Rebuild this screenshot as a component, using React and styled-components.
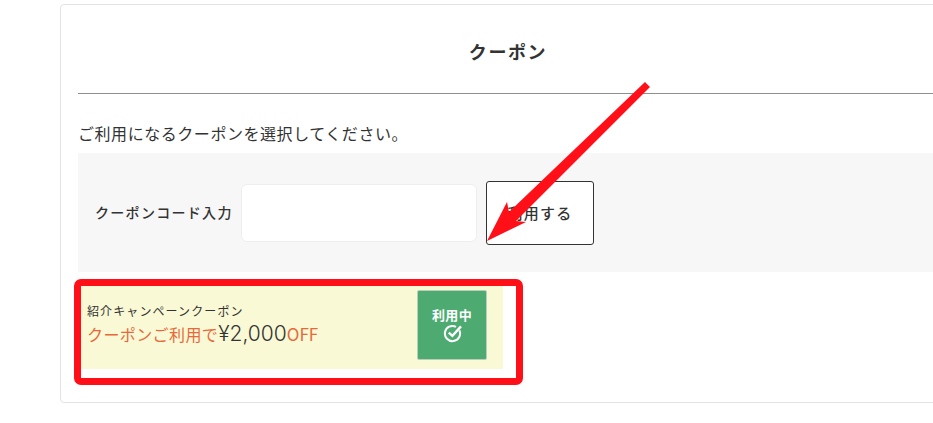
import React from 'react';
import styled, { createGlobalStyle } from 'styled-components';

const GlobalStyle = createGlobalStyle`
    html, body {
        margin: 0;
        padding: 0;
        background: #fff;
        overflow: hidden;
    }
    body {
        font-family: "Noto Sans CJK JP", "Noto Sans", sans-serif;
        color: #333;
    }
`

const Page = styled.div`
    position: relative;
    width: 933px;
    height: 423px;
    overflow: hidden;
    padding: 4px 0 0 60px;
    box-sizing: border-box;
`
const Card = styled.section`
    width: 896px;
    height: 399px;
    box-sizing: border-box;
    padding: 0 0 0 17px;
    border: 1px solid #e3e3e3;
    border-radius: 4px;
    background: #fff;
`
const Title = styled.h2`
    margin: 0;
    height: 89px;
    padding: 4px 17px 0 0;
    box-sizing: border-box;
    border-bottom: 1px solid #8f8f8f;
    display: flex;
    align-items: center;
    justify-content: center;
    font-size: 18px;
    font-weight: 700;
    letter-spacing: 1.6px;
    color: #333;
`
const Lead = styled.p`
    margin: 0;
    height: 59px;
    padding-top: 18px;
    box-sizing: border-box;
    display: flex;
    align-items: center;
    font-size: 16px;
    letter-spacing: 0.55px;
    color: #333;
`
const CodePanel = styled.div`
    height: 119px;
    background: #f7f7f7;
    display: flex;
    align-items: flex-start;
    padding: 28px 0 0 17px;
    box-sizing: border-box;
`
const CodeLabel = styled.label`
    width: 146px;
    height: 62px;
    flex: none;
    display: flex;
    align-items: center;
    font-size: 14px;
    font-weight: 500;
    letter-spacing: 1.3px;
    color: #333;
`
const CodeInput = styled.input`
    width: 236px;
    height: 58px;
    flex: none;
    box-sizing: border-box;
    margin-top: 3px;
    border: 1px solid #eeeeee;
    border-radius: 6px;
    background: #fff;
    outline: none;
`
const ApplyButton = styled.button`
    width: 108px;
    height: 64px;
    flex: none;
    margin-left: 9px;
    border: 1px solid #333;
    border-radius: 3px;
    background: #fff;
    font-family: inherit;
    font-size: 15px;
    font-weight: 500;
    letter-spacing: 1.3px;
    color: #333;
    padding: 0 0 2px;
`
const CouponRow = styled.div`
    width: 425px;
    height: 86px;
    margin-top: 11px;
    box-sizing: border-box;
    background: #f9f9d5;
    display: flex;
    align-items: flex-start;
    justify-content: space-between;
    padding: 7px 16px 0 9px;
`
const CouponText = styled.div`
    display: flex;
    flex-direction: column;
    padding-top: 12px;
`
const CouponName = styled.span`
    font-size: 12px;
    line-height: 17px;
    letter-spacing: 1.1px;
    color: #333;
`
const CouponOffer = styled.span`
    font-size: 16px;
    line-height: 30px;
    letter-spacing: 0.4px;
    color: #e8683a;
    white-space: nowrap;
    display: flex;
    align-items: baseline;
`
const Amount = styled.span`
    font-family: "Inter", "Noto Sans", sans-serif;
    font-size: 21px;
    font-weight: 300;
    letter-spacing: 0;
    color: #333;
`
const OffLabel = styled.span`
    font-size: 17px;
    letter-spacing: 0;
`
const InUseBadge = styled.div`
    width: 70px;
    height: 70px;
    box-sizing: border-box;
    border: 1px solid #b9cfbb;
    border-radius: 2px;
    background: #4dab72;
    color: #fff;
    display: flex;
    flex-direction: column;
    align-items: center;
    padding-top: 14px;
    font-size: 13px;
    font-weight: 700;
    line-height: 19px;
    letter-spacing: 0.3px;
`
const Highlight = styled.div`
    position: absolute;
    left: 74px;
    top: 279px;
    width: 449px;
    height: 106px;
    box-sizing: border-box;
    border: 7px solid #ff0f17;
    border-radius: 7px;
    pointer-events: none;
`
const ArrowLayer = styled.svg`
    position: absolute;
    left: 0;
    top: 0;
    pointer-events: none;
`

const App = () => {
    return (
        <Page>
            <GlobalStyle />
            <Card>
                <Title>クーポン</Title>
                <Lead>ご利用になるクーポンを選択してください。</Lead>
                <CodePanel>
                    <CodeLabel>クーポンコード入力</CodeLabel>
                    <CodeInput type='text' />
                    <ApplyButton>利用する</ApplyButton>
                </CodePanel>
                <CouponRow>
                    <CouponText>
                        <CouponName>紹介キャンペーンクーポン</CouponName>
                        <CouponOffer>クーポンご利用で<Amount>¥2,000</Amount><OffLabel>OFF</OffLabel></CouponOffer>
                    </CouponText>
                    <InUseBadge>
                        利用中
                        <svg width='20' height='19' viewBox='-1 0 20 19' fill='none' stroke='#fff' strokeWidth='2'>
                            <path d='M16.4 6.4 A7.6 7.6 0 1 1 13 2.8' />
                            <path d='M5.8 8.6 L9.4 11.8 L18 2.4' strokeWidth='2.4' />
                        </svg>
                    </InUseBadge>
                </CouponRow>
            </Card>
            <Highlight />
            <ArrowLayer width='933' height='423' viewBox='0 0 933 423'>
                <path d='M645 82 L650 87 L516 221 L526 222 L487 241 L507 202 L509 212 Z' fill='#ff0f17' />
            </ArrowLayer>
        </Page>
    )
}

export default App;
